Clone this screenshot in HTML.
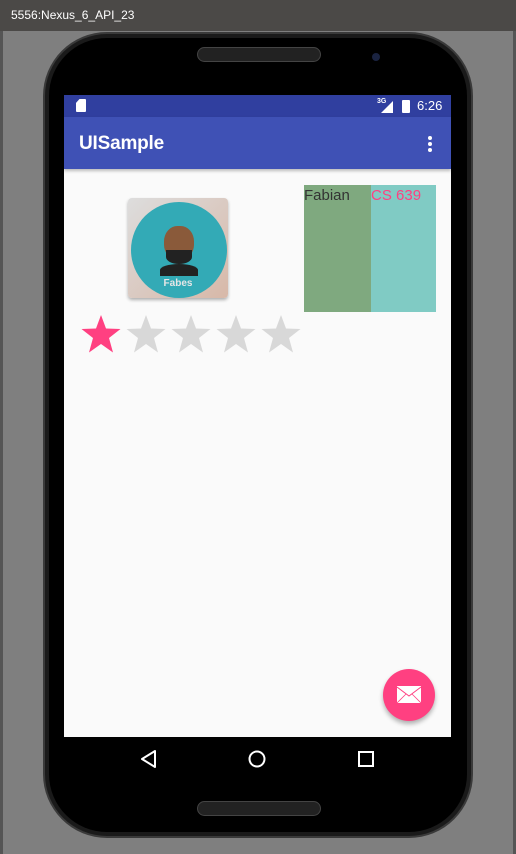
<!DOCTYPE html>
<html><head><style>
body{margin:0;width:516px;height:854px;background:#7f7f7f;position:relative;overflow:hidden;font-family:"Liberation Sans",sans-serif}
.a{position:absolute}
</style></head><body>
<div class="a" style="left:0;top:0;width:516px;height:31px;background:#4b4947;color:#fff;font-size:12px;line-height:31px;padding-left:11px;box-sizing:border-box">5556:Nexus_6_API_23</div>
<div class="a" style="left:0;top:31px;width:3px;height:823px;background:#555"></div>
<div class="a" style="left:513px;top:31px;width:3px;height:823px;background:#555"></div>
<div class="a" style="left:45px;top:34px;width:426px;height:802px;background:#1a1a1a;border-radius:62px;box-shadow:0 0 0 2px #3a3a3a"></div>
<div class="a" style="left:49px;top:38px;width:418px;height:794px;background:#000;border-radius:58px"></div>
<div class="a" style="left:197px;top:47px;width:124px;height:15px;background:#222;border-radius:8px;border:1px solid #444;box-sizing:border-box"></div>
<div class="a" style="left:372px;top:53px;width:8px;height:8px;background:#1a2340;border-radius:50%"></div>
<div class="a" style="left:197px;top:801px;width:124px;height:15px;background:#222;border-radius:8px;border:1px solid #444;box-sizing:border-box"></div>
<div class="a" style="left:64px;top:95px;width:387px;height:642px;background:#fafafa"></div>
<div class="a" style="left:64px;top:95px;width:387px;height:22px;background:#303f9f"></div>
<div class="a" style="left:76px;top:99px;width:10px;height:13px;background:#fff;border-radius:1px;clip-path:polygon(35% 0,100% 0,100% 100%,0 100%,0 30%)"></div>
<div class="a" style="left:381px;top:101px;width:12px;height:12px;background:#fff;clip-path:polygon(100% 0,100% 100%,0 100%)"></div>
<div class="a" style="left:377px;top:98px;color:#fff;font-size:7px;font-weight:bold">3G</div>
<div class="a" style="left:402px;top:100px;width:8px;height:13px;background:#fff;border-radius:1px"></div>
<div class="a" style="left:417px;top:97px;color:#fff;font-size:13px;line-height:17px">6:26</div>
<div class="a" style="left:64px;top:117px;width:387px;height:52px;background:#3f51b5;box-shadow:0 2px 3px rgba(0,0,0,.25)"></div>
<div class="a" style="left:79px;top:133px;color:#fff;font-size:19px;line-height:22px;font-weight:bold;letter-spacing:-0.2px">UISample</div>
<div class="a" style="left:428px;top:136px;width:4px;height:4px;background:#fff;border-radius:50%;box-shadow:0 6px 0 #fff,0 12px 0 #fff"></div>
<div class="a" style="left:128px;top:198px;width:100px;height:100px;border-radius:4px;background:linear-gradient(135deg,#ddd,#d8b8a8);box-shadow:0 2px 3px rgba(0,0,0,.3);overflow:hidden">
<div class="a" style="left:3px;top:4px;width:96px;height:96px;border-radius:50%;background:#33aab6"></div>
<div class="a" style="left:36px;top:28px;width:30px;height:34px;border-radius:45%;background:#8a5a3a"></div>
<div class="a" style="left:38px;top:52px;width:26px;height:14px;border-radius:0 0 50% 50%;background:#222"></div>
<div class="a" style="left:32px;top:66px;width:38px;height:12px;border-radius:50% 50% 0 0;background:#222"></div>
<div class="a" style="left:0;top:80px;width:100px;text-align:center;color:#e6e6e6;font-size:10px;font-weight:bold">Fabes</div>
</div>
<div class="a" style="left:304px;top:185px;width:67px;height:127px;background:#7fa97f;color:#333;font-size:15px;line-height:22px">Fabian</div>
<div class="a" style="left:371px;top:185px;width:65px;height:127px;background:#80cbc4;color:#ff4081;font-size:15px;line-height:22px">CS 639</div>
<svg class="a" style="left:80px;top:313px" width="225" height="42" viewBox="0 0 225 42">
<polygon points="21,2 26,15.5 40.5,16 29,25 33,39.5 21,31 9,39.5 13,25 1.5,16 16,15.5" fill="#ff4081"/>
<polygon transform="translate(45 0)" points="21,2 26,15.5 40.5,16 29,25 33,39.5 21,31 9,39.5 13,25 1.5,16 16,15.5" fill="#d8d8d8"/>
<polygon transform="translate(90 0)" points="21,2 26,15.5 40.5,16 29,25 33,39.5 21,31 9,39.5 13,25 1.5,16 16,15.5" fill="#d8d8d8"/>
<polygon transform="translate(135 0)" points="21,2 26,15.5 40.5,16 29,25 33,39.5 21,31 9,39.5 13,25 1.5,16 16,15.5" fill="#d8d8d8"/>
<polygon transform="translate(180 0)" points="21,2 26,15.5 40.5,16 29,25 33,39.5 21,31 9,39.5 13,25 1.5,16 16,15.5" fill="#d8d8d8"/>
</svg>
<div class="a" style="left:383px;top:669px;width:52px;height:52px;border-radius:50%;background:#ff4081;box-shadow:0 3px 5px rgba(0,0,0,.3)"></div>
<svg class="a" style="left:397px;top:686px" width="24" height="18" viewBox="0 0 24 18"><rect x="0" y="0" width="24" height="17" fill="#fff"/><polyline points="0,1 12,10 24,1" fill="none" stroke="#ff4081" stroke-width="1"/><line x1="0" y1="17" x2="9" y2="8" stroke="#ff4081" stroke-width=".8"/><line x1="24" y1="17" x2="15" y2="8" stroke="#ff4081" stroke-width=".8"/></svg>
<svg class="a" style="left:64px;top:737px" width="387" height="45"><polygon points="78,22 91,14 91,30" fill="none" stroke="#fff" stroke-width="2" stroke-linejoin="round"/><circle cx="193" cy="22" r="7.5" fill="none" stroke="#fff" stroke-width="2"/><rect x="295" y="15" width="14" height="14" fill="none" stroke="#fff" stroke-width="2"/></svg>
</body></html>
